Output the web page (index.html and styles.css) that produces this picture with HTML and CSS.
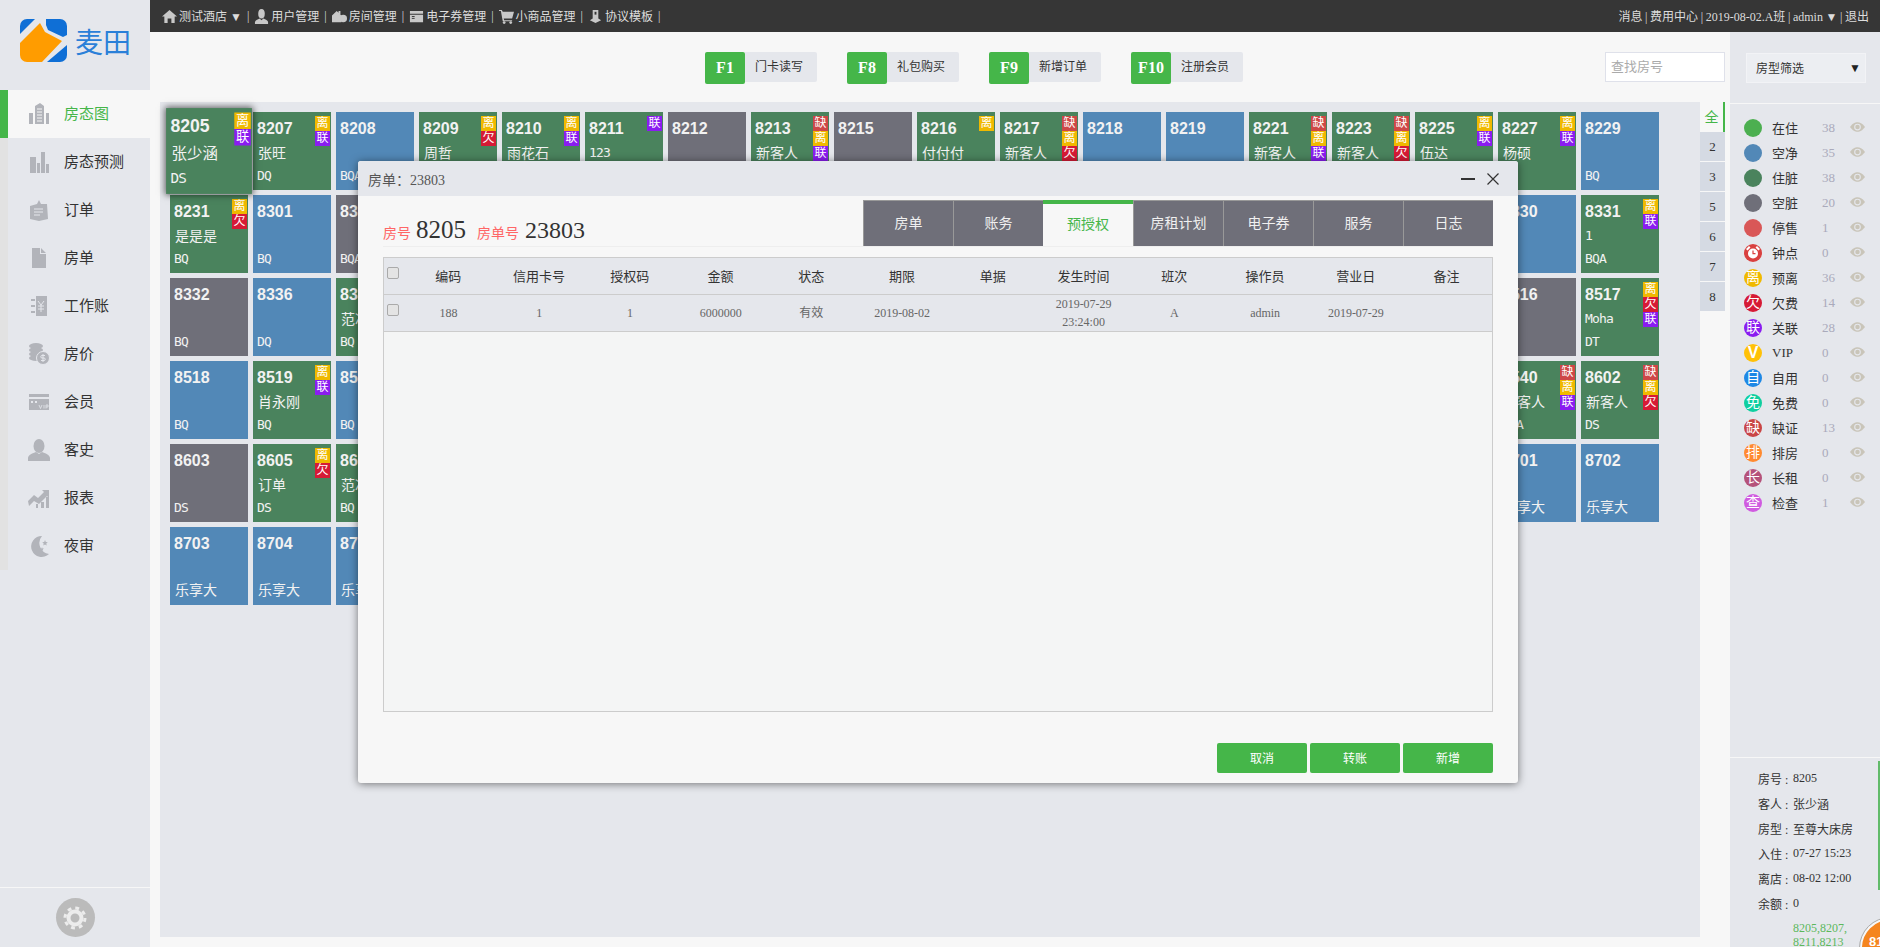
FILE: index.html
```html
<!DOCTYPE html>
<html lang="zh-CN">
<head>
    <meta charset="UTF-8">
    <title>房态图</title>
    <link rel="stylesheet" href="styles.css">
</head>
<body>
    <svg class="sprites" width="0" height="0">
        <symbol id="eye" viewBox="0 0 16 10">
            <path d="M0 5C3 1 5.500 0 8 0s5 1 8 5c-3 4-5.500 5-8 5S3 9 0 5z" fill="#c9c5b9"/>
            <circle cx="8" cy="5" r="3.600" fill="#e5e7ec"/>
            <circle cx="8" cy="5" r="2.400" fill="#c9c5b9"/>
        </symbol>
    </svg>

    <div class="app">
        <aside class="sidebar">
            <div class="logo">
                <svg width="48" height="43" viewBox="0 0 48 43">
                    <path d="M7 0h8L0 15V7a7 7 0 0 1 7-7z" fill="#0f6fd6"/>
                    <path d="M0 24L20 4l5 9 17 9-20 21H7a7 7 0 0 1-7-7z" fill="#ff9c00"/>
                    <path d="M26 0h14a7 7 0 0 1 7 7v9l-4 2-15-7-2-5z" fill="#0f6fd6"/>
                    <path d="M47 26v10a7 7 0 0 1-7 7H27z" fill="#0f6fd6"/>
                </svg>
                <span class="logo-text">麦田</span>
            </div>
            <nav class="nav">
                <a class="nav-item active">
                    <svg class="nav-icon" viewBox="0 0 22 22"><path d="M1 21V10h4v11zM7 21V3l5-3 4 3v18zM18 21V10h3v11z"/><path d="M9 6h5M9 9h5M9 12h5M9 15h5M9 18h5" stroke="#f7f7f7"/></svg>
                    房态图
                </a>
                <a class="nav-item">
                    <svg class="nav-icon" viewBox="0 0 22 22"><path d="M2 6h6v16H2zM9 12h3v10H9zM13 1h4v21h-4zM18 13h3v9h-3z"/></svg>
                    房态预测
                </a>
                <a class="nav-item">
                    <svg class="nav-icon" viewBox="0 0 22 22"><path d="M2 7l7-2 2-4 2 4 6 0 1 15-9 2-9-2z"/><path d="M6 10h9M6 13h9M6 16h6" stroke="#e5e7ec"/></svg>
                    订单
                </a>
                <a class="nav-item">
                    <svg class="nav-icon" viewBox="0 0 22 22"><path d="M4 1h8v6h6v14H4zM13 1l5 5h-5z"/></svg>
                    房单
                </a>
                <a class="nav-item">
                    <svg class="nav-icon" viewBox="0 0 22 22"><path d="M8 1h11v20H8zM3 4h4v2H3zM3 10h4v2H3zM3 16h4v2H3z"/><path d="M10 6l3 4 3-4M13 10v7M10 11h6M10 14h6" stroke="#e5e7ec" fill="none"/></svg>
                    工作账
                </a>
                <a class="nav-item">
                    <svg class="nav-icon" viewBox="0 0 22 22"><ellipse cx="8" cy="3" rx="7" ry="3"/><ellipse cx="8" cy="7" rx="7" ry="3"/><ellipse cx="8" cy="11" rx="7" ry="3"/><ellipse cx="8" cy="15" rx="7" ry="3"/><circle cx="15" cy="15" r="6.500" stroke="#e5e7ec"/><path d="M17 12.500h-3a1 1 0 0 0 0 2.500h2a1 1 0 0 1 0 2.500h-3M15 11v8" stroke="#e5e7ec" fill="none"/></svg>
                    房价
                </a>
                <a class="nav-item">
                    <svg class="nav-icon" viewBox="0 0 22 22"><path d="M1 3h20v3H1zM1 8h20v11H1z"/><path d="M3 11h2M7 11h2" stroke="#e5e7ec" stroke-width="2"/><path d="M11 14l1.500 3.500L14 14M16 14v3.500M18 17.500V14h2v2h-2" stroke="#e5e7ec" fill="none" stroke-width=".8"/></svg>
                    会员
                </a>
                <a class="nav-item">
                    <svg class="nav-icon" viewBox="0 0 22 22"><ellipse cx="11" cy="7" rx="5.500" ry="7"/><path d="M0 22v-3c0-3 5-5 8-6l3 2 3-2c3 1 8 3 8 6v3z"/></svg>
                    客史
                </a>
                <a class="nav-item">
                    <svg class="nav-icon" viewBox="0 0 22 22"><path d="M0 14l6-6 4 3 6-6-2-2h7v8l-2-2-8 8-5-3-5 5zM8 17h2v4H8zM13 15h3v6h-3zM18 10h3v11h-3z"/></svg>
                    报表
                </a>
                <a class="nav-item">
                    <svg class="nav-icon" viewBox="0 0 22 22"><path d="M14 1A10.500 10.500 0 1 0 21 19 11 11 0 0 1 14 1z"/><path d="M17 5l.8 2 2 .2-1.500 1.400.4 2-1.700-1-1.700 1 .4-2-1.500-1.400 2-.2zM14 12l.5 1.500 1.500.1-1.200 1 .4 1.500-1.200-.8-1.200.8.400-1.500-1.200-1 1.500-.1z"/></svg>
                    夜审
                </a>
            </nav>
            <div class="settings">
                <span class="gear">
                    <svg width="24" height="24" viewBox="0 0 24 24" fill="none" stroke="#ececec">
                        <circle cx="12" cy="12" r="6.500" stroke-width="4"/>
                        <circle cx="12" cy="12" r="10" stroke-width="3" stroke-dasharray="3.850 4"/>
                    </svg>
                </span>
            </div>
        </aside>

        <header class="topbar">
            <div class="top-links">
                <span class="top-item"><svg class="top-icon" viewBox="0 0 16 16"><path d="M8 1L0 8h2.500v7H6v-5h4v5h3.500V8H16z"/></svg>测试酒店 ▼</span>
                <span>|</span>
                <span class="top-item"><svg class="top-icon" viewBox="0 0 16 16"><ellipse cx="8" cy="5" rx="3.500" ry="5"/><path d="M1 16v-2c0-2 3-3 5-4l2 2 2-2c2 1 5 2 5 4v2z"/></svg>用户管理</span>
                <span>|</span>
                <span class="top-item"><svg class="top-icon" viewBox="0 0 16 16"><path d="M0 14V7l5-5 2 2V2h2v4l1 1v7z"/><circle cx="12" cy="10" r="4"/></svg>房间管理</span>
                <span>|</span>
                <span class="top-item"><svg class="top-icon" viewBox="0 0 16 16"><path d="M1 2h14v3H1zM1 6h14v8H1z"/><path d="M3 8h3M3 10h3" stroke="#363636"/></svg>电子券管理</span>
                <span>|</span>
                <span class="top-item"><svg class="top-icon" viewBox="0 0 16 16"><path d="M0 1h3l1 2h12l-2 7H5l.5 2H14v1H4L2 2H0z"/><circle cx="5.500" cy="14.500" r="1.500"/><circle cx="12.500" cy="14.500" r="1.500"/></svg>小商品管理</span>
                <span>|</span>
                <span class="top-item"><svg class="top-icon" viewBox="0 0 16 16"><path d="M5 1h6v9l3 2-6 3-6-3 3-2z"/><path d="M7 3h2v3H7z" fill="#363636"/></svg>协议模板</span>
                <span>|</span>
            </div>
            <div class="top-user">消息 | 费用中心 | 2019-08-02.A班 | admin ▼ | 退出</div>
        </header>

        <main class="main">
            <div class="toolbar">
                <div class="tools">
                    <div class="tool"><span class="key">F1</span><span class="tool-label">门卡读写</span></div>
                    <div class="tool"><span class="key">F8</span><span class="tool-label">礼包购买</span></div>
                    <div class="tool"><span class="key">F9</span><span class="tool-label">新增订单</span></div>
                    <div class="tool"><span class="key">F10</span><span class="tool-label">注册会员</span></div>
                </div>
                <input class="search" type="text" placeholder="查找房号">
            </div>
            <div class="floor-area">
                <div class="rooms">
                    <div class="room green selected"><b>8205</b><span class="name">张少涵</span><span class="code">DS</span><div class="flags"><i class="li">离</i><i class="lian">联</i></div></div>
                    <div class="room green"><b>8207</b><span class="name">张旺</span><span class="code">DQ</span><div class="flags"><i class="li">离</i><i class="lian">联</i></div></div>
                    <div class="room blue"><b>8208</b><span class="code">BQA</span></div>
                    <div class="room green"><b>8209</b><span class="name">周哲</span><div class="flags"><i class="li">离</i><i class="qian">欠</i></div></div>
                    <div class="room green"><b>8210</b><span class="name">雨花石</span><div class="flags"><i class="li">离</i><i class="lian">联</i></div></div>
                    <div class="room green"><b>8211</b><span class="name latin">123</span><div class="flags"><i class="lian">联</i></div></div>
                    <div class="room grey"><b>8212</b></div>
                    <div class="room green"><b>8213</b><span class="name">新客人</span><div class="flags"><i class="que">缺</i><i class="li">离</i><i class="lian">联</i></div></div>
                    <div class="room grey"><b>8215</b></div>
                    <div class="room green"><b>8216</b><span class="name">付付付</span><div class="flags"><i class="li">离</i></div></div>
                    <div class="room green"><b>8217</b><span class="name">新客人</span><div class="flags"><i class="que">缺</i><i class="li">离</i><i class="qian">欠</i></div></div>
                    <div class="room blue"><b>8218</b></div>
                    <div class="room blue"><b>8219</b></div>
                    <div class="room green"><b>8221</b><span class="name">新客人</span><div class="flags"><i class="que">缺</i><i class="li">离</i><i class="lian">联</i></div></div>
                    <div class="room green"><b>8223</b><span class="name">新客人</span><div class="flags"><i class="que">缺</i><i class="li">离</i><i class="qian">欠</i></div></div>
                    <div class="room green"><b>8225</b><span class="name">伍达</span><div class="flags"><i class="li">离</i><i class="lian">联</i></div></div>
                    <div class="room green"><b>8227</b><span class="name">杨硕</span><div class="flags"><i class="li">离</i><i class="lian">联</i></div></div>
                    <div class="room blue"><b>8229</b><span class="code">BQ</span></div>

                    <div class="room green"><b>8231</b><span class="name">是是是</span><span class="code">BQ</span><div class="flags"><i class="li">离</i><i class="qian">欠</i></div></div>
                    <div class="room blue"><b>8301</b><span class="code">BQ</span></div>
                    <div class="room grey"><b>8302</b><span class="code">BQA</span></div>
                    <div class="room blue"></div><div class="room blue"></div><div class="room blue"></div><div class="room blue"></div>
                    <div class="room blue"></div><div class="room blue"></div><div class="room blue"></div><div class="room blue"></div>
                    <div class="room blue"></div><div class="room blue"></div><div class="room blue"></div><div class="room blue"></div>
                    <div class="room blue"></div>
                    <div class="room blue"><b>8330</b></div>
                    <div class="room green"><b>8331</b><span class="name latin">1</span><span class="code">BQA</span><div class="flags"><i class="li">离</i><i class="lian">联</i></div></div>

                    <div class="room grey"><b>8332</b><span class="code">BQ</span></div>
                    <div class="room blue"><b>8336</b><span class="code">DQ</span></div>
                    <div class="room green"><b>8337</b><span class="name">范冰</span><span class="code">BQ</span></div>
                    <div class="room blue"></div><div class="room blue"></div><div class="room blue"></div><div class="room blue"></div>
                    <div class="room blue"></div><div class="room blue"></div><div class="room blue"></div><div class="room blue"></div>
                    <div class="room blue"></div><div class="room blue"></div><div class="room blue"></div><div class="room blue"></div>
                    <div class="room blue"></div>
                    <div class="room grey"><b>8516</b></div>
                    <div class="room green"><b>8517</b><span class="name latin">Moha</span><span class="code">DT</span><div class="flags"><i class="li">离</i><i class="qian">欠</i><i class="lian">联</i></div></div>

                    <div class="room blue"><b>8518</b><span class="code">BQ</span></div>
                    <div class="room green"><b>8519</b><span class="name">肖永刚</span><span class="code">BQ</span><div class="flags"><i class="li">离</i><i class="lian">联</i></div></div>
                    <div class="room blue"><b>8520</b><span class="code">BQ</span></div>
                    <div class="room blue"></div><div class="room blue"></div><div class="room blue"></div><div class="room blue"></div>
                    <div class="room blue"></div><div class="room blue"></div><div class="room blue"></div><div class="room blue"></div>
                    <div class="room blue"></div><div class="room blue"></div><div class="room blue"></div><div class="room blue"></div>
                    <div class="room blue"></div>
                    <div class="room green"><b>8540</b><span class="name">新客人</span><span class="code">BQA</span><div class="flags"><i class="que">缺</i><i class="li">离</i><i class="lian">联</i></div></div>
                    <div class="room green"><b>8602</b><span class="name">新客人</span><span class="code">DS</span><div class="flags"><i class="que">缺</i><i class="li">离</i><i class="qian">欠</i></div></div>

                    <div class="room grey"><b>8603</b><span class="code">DS</span></div>
                    <div class="room green"><b>8605</b><span class="name">订单</span><span class="code">DS</span><div class="flags"><i class="li">离</i><i class="qian">欠</i></div></div>
                    <div class="room green"><b>8606</b><span class="name">范冰</span><span class="code">BQ</span></div>
                    <div class="room blue"></div><div class="room blue"></div><div class="room blue"></div><div class="room blue"></div>
                    <div class="room blue"></div><div class="room blue"></div><div class="room blue"></div><div class="room blue"></div>
                    <div class="room blue"></div><div class="room blue"></div><div class="room blue"></div><div class="room blue"></div>
                    <div class="room blue"></div>
                    <div class="room blue"><b>8701</b><span class="name-low">乐享大</span></div>
                    <div class="room blue"><b>8702</b><span class="name-low">乐享大</span></div>

                    <div class="room blue"><b>8703</b><span class="name-low">乐享大</span></div>
                    <div class="room blue"><b>8704</b><span class="name-low">乐享大</span></div>
                    <div class="room blue"><b>8705</b><span class="name-low">乐享大</span></div>
                </div>
                <div class="floors">
                    <span class="floor active">全</span>
                    <span class="floor">2</span>
                    <span class="floor">3</span>
                    <span class="floor">5</span>
                    <span class="floor">6</span>
                    <span class="floor">7</span>
                    <span class="floor">8</span>
                </div>
            </div>
        </main>

        <aside class="side-right">
            <div class="filter">
                <div class="room-type">房型筛选<span class="caret">▼</span></div>
            </div>
            <ul class="legend">
                <li><span class="dot" style="background:#4caf50"></span><span class="legend-name">在住</span><span class="count">38</span><svg class="eye"><use href="#eye"/></svg></li>
                <li><span class="dot" style="background:#5288b7"></span><span class="legend-name">空净</span><span class="count">35</span><svg class="eye"><use href="#eye"/></svg></li>
                <li><span class="dot" style="background:#4a835d"></span><span class="legend-name">住脏</span><span class="count">38</span><svg class="eye"><use href="#eye"/></svg></li>
                <li><span class="dot" style="background:#6f6f79"></span><span class="legend-name">空脏</span><span class="count">20</span><svg class="eye"><use href="#eye"/></svg></li>
                <li><span class="dot" style="background:#d95757"></span><span class="legend-name">停售</span><span class="count">1</span><svg class="eye"><use href="#eye"/></svg></li>
                <li><span class="dot" style="background:#d9403f"><svg width="14" height="14" viewBox="0 0 14 14"><circle cx="7" cy="7.500" r="5" fill="#fff"/><path d="M7 4.500v3.200h2.500" stroke="#d9403f" stroke-width="1.200" fill="none"/><path d="M0 3l3-3 1.500 1.500-3 3zM14 3l-3-3-1.500 1.500 3 3z" fill="#fff"/></svg></span><span class="legend-name">钟点</span><span class="count">0</span><svg class="eye"><use href="#eye"/></svg></li>
                <li><span class="dot" style="background:#f0b900">离</span><span class="legend-name">预离</span><span class="count">36</span><svg class="eye"><use href="#eye"/></svg></li>
                <li><span class="dot" style="background:#d61a35">欠</span><span class="legend-name">欠费</span><span class="count">14</span><svg class="eye"><use href="#eye"/></svg></li>
                <li><span class="dot" style="background:#8a1cf0">联</span><span class="legend-name">关联</span><span class="count">28</span><svg class="eye"><use href="#eye"/></svg></li>
                <li><span class="dot vip" style="background:#ffc107">V</span><span class="legend-name">VIP</span><span class="count">0</span><svg class="eye"><use href="#eye"/></svg></li>
                <li><span class="dot" style="background:#1e88e5">自</span><span class="legend-name">自用</span><span class="count">0</span><svg class="eye"><use href="#eye"/></svg></li>
                <li><span class="dot" style="background:#0fcfa0">免</span><span class="legend-name">免费</span><span class="count">0</span><svg class="eye"><use href="#eye"/></svg></li>
                <li><span class="dot" style="background:#c94545">缺</span><span class="legend-name">缺证</span><span class="count">13</span><svg class="eye"><use href="#eye"/></svg></li>
                <li><span class="dot" style="background:#ff8a30">排</span><span class="legend-name">排房</span><span class="count">0</span><svg class="eye"><use href="#eye"/></svg></li>
                <li><span class="dot" style="background:#b5527a">长</span><span class="legend-name">长租</span><span class="count">0</span><svg class="eye"><use href="#eye"/></svg></li>
                <li><span class="dot" style="background:#d05be0">查</span><span class="legend-name">检查</span><span class="count">1</span><svg class="eye"><use href="#eye"/></svg></li>
            </ul>
            <div class="info">
                <div class="info-row"><span class="info-label">房号 :</span>8205</div>
                <div class="info-row"><span class="info-label">客人 :</span>张少涵</div>
                <div class="info-row"><span class="info-label">房型 :</span>至尊大床房</div>
                <div class="info-row"><span class="info-label">入住 :</span>07-27 15:23</div>
                <div class="info-row"><span class="info-label">离店 :</span>08-02 12:00</div>
                <div class="info-row"><span class="info-label">余额 :</span>0</div>
                <div class="linked">8205,8207,<br>8211,8213</div>
            </div>
        </aside>
    </div>

    <div class="bubble">81</div>

    <section class="dialog">
        <div class="dialog-head">
            <span class="dialog-title">房单：23803</span>
            <div class="dialog-btns">
                <span class="btn-min"></span>
                <svg width="12" height="12" viewBox="0 0 12 12"><path d="M.5.500l11 11M11.500.500l-11 11" stroke="#333" stroke-width="1.200"/></svg>
            </div>
        </div>
        <div class="dialog-body">
            <div class="bill-top">
                <div class="bill-title">
                    <span class="bill-label">房号</span><span class="bill-no room-no">8205</span>
                    <span class="bill-label">房单号</span><span class="bill-no">23803</span>
                </div>
                <div class="tabs">
                    <span class="tab">房单</span>
                    <span class="tab">账务</span>
                    <span class="tab active">预授权</span>
                    <span class="tab">房租计划</span>
                    <span class="tab">电子券</span>
                    <span class="tab">服务</span>
                    <span class="tab">日志</span>
                </div>
            </div>
            <div class="table-box">
                <table class="auth-table">
                    <colgroup>
                        <col class="col-check">
                        <col><col><col><col><col><col><col><col><col><col><col><col>
                    </colgroup>
                    <thead>
                        <tr>
                            <th><input class="check" type="checkbox"></th>
                            <th>编码</th><th>信用卡号</th><th>授权码</th><th>金额</th><th>状态</th><th>期限</th>
                            <th>单据</th><th>发生时间</th><th>班次</th><th>操作员</th><th>营业日</th><th>备注</th>
                        </tr>
                    </thead>
                    <tbody>
                        <tr>
                            <td><input class="check" type="checkbox"></td>
                            <td>188</td><td>1</td><td>1</td><td>6000000</td><td>有效</td><td>2019-08-02</td>
                            <td></td><td>2019-07-29<br>23:24:00</td><td>A</td><td>admin</td><td>2019-07-29</td><td></td>
                        </tr>
                    </tbody>
                </table>
            </div>
            <div class="dialog-foot">
                <button class="btn">取消</button>
                <button class="btn">转账</button>
                <button class="btn">新增</button>
            </div>
        </div>
    </section>
</body>
</html>
```

FILE: styles.css
```css
* {
    box-sizing: border-box;
}
html, body {
    height: 100%;
    margin: 0;
    overflow: hidden;
}
body {
    position: relative;
    font-family: "Liberation Serif", "Noto Sans CJK SC", serif;
    font-size: 12px;
    color: #333;
    background-color: #f7f7f7;
}
.sprites {
    position: absolute;
}
ul {
    margin: 0;
    padding: 0;
    list-style: none;
}

.app {
    display: grid;
    grid-template-columns: 150px 1fr 150px;
    grid-template-rows: 32px 1fr;
    height: 100vh;
}

/* left menu */
.sidebar {
    grid-row: 1 / 3;
    display: flex;
    flex-direction: column;
    background-color: #e5e7ec;
}
.logo {
    display: flex;
    align-items: center;
    gap: 7px;
    height: 90px;
    padding: 0 0 9px 20px;
}
.logo-text {
    font-family: "Noto Sans CJK SC", sans-serif;
    font-size: 28px;
    line-height: 32px;
    color: #2a80d8;
}
.nav {
    border-left: 8px solid #e2e2e2;
}
.nav-item {
    display: flex;
    align-items: center;
    gap: 14px;
    height: 48px;
    padding: 0 0 4px 20px;
    font-size: 15px;
}
.nav-item.active {
    margin-left: -8px;
    border-left: 8px solid #45b649;
    color: #45b649;
    background-color: #f7f7f7;
}
.nav-icon {
    width: 22px;
    height: 22px;
    margin-top: 4px;
    fill: #b2b4ba;
}
.settings {
    display: flex;
    justify-content: center;
    align-items: center;
    margin-top: auto;
    height: 60px;
    border-top: 1px solid #f7f7f7;
}
.gear {
    display: flex;
    justify-content: center;
    align-items: center;
    width: 39px;
    height: 39px;
    border-radius: 50%;
    background-color: #bbb;
}

/* top bar */
.topbar {
    grid-column: 2 / 4;
    display: flex;
    justify-content: space-between;
    align-items: center;
    padding: 0 11px 0 12px;
    color: #ddd;
    background-color: #363636;
}
.top-links {
    display: flex;
    align-items: center;
    gap: 5px;
}
.top-item {
    display: flex;
    align-items: center;
    gap: 2px;
}
.top-icon {
    width: 15px;
    height: 15px;
    fill: #c8c8c8;
}
.top-user {
    word-spacing: -0.4px;
}

/* toolbar */
.main {
    display: flex;
    flex-direction: column;
    min-width: 0;
    padding: 0 5px 10px 10px;
}
.toolbar {
    display: flex;
    justify-content: space-between;
    height: 70px;
    padding: 20px 0 0 545px;
}
.tools {
    display: flex;
    gap: 30px;
}
.tool {
    display: flex;
    width: 112px;
    align-items: flex-start;
}
.key {
    width: 40px;
    height: 32px;
    border-radius: 2px;
    font-size: 16px;
    font-weight: bold;
    line-height: 32px;
    text-align: center;
    color: #fff;
    background-color: #45b649;
}
.tool-label {
    width: 72px;
    height: 30px;
    padding-left: 10px;
    border-radius: 0 2px 2px 0;
    line-height: 30px;
    background-color: #e5e7ec;
}
.search {
    width: 120px;
    height: 30px;
    padding: 0 5px;
    border: 1px solid #dfe1ea;
    font-family: inherit;
    font-size: 13px;
    background-color: #fff;
}
.search::placeholder {
    color: #aaa;
}

/* room grid */
.floor-area {
    flex: 1;
    display: flex;
    min-height: 0;
}
.rooms {
    flex: 1;
    display: grid;
    grid-template-columns: repeat(18, 78px);
    grid-auto-rows: 78px;
    gap: 5px;
    align-content: start;
    padding: 10px;
    background-color: #e5e7ec;
}
.room {
    position: relative;
    display: grid;
    grid-template-rows: 24px 24px 20px;
    align-items: center;
    padding: 5px 0 0 4px;
    color: #f2f2f2;
}
.room b {
    font-family: "Liberation Sans", sans-serif;
    font-size: 16px;
}
.green { background-color: #4a835d; }
.blue { background-color: #5288b7; }
.grey { background-color: #6f6f79; }
.selected {
    z-index: 2;
    transform: scale(1.1);
    box-shadow: 0 0 6px 1px rgba(0, 0, 0, 0.6);
}
.name {
    grid-row: 2;
    margin-top: -2px;
    padding-left: 1px;
    font-size: 14px;
    white-space: nowrap;
}
.name.latin, .code {
    font-family: "DejaVu Sans Mono", monospace;
    font-size: 13px;
    letter-spacing: -0.8px;
}
.name.latin {
    padding-left: 0;
}
.name-low {
    grid-row: 3;
    margin-top: -2px;
    padding-left: 1px;
    font-size: 14px;
}
.code {
    grid-row: 3;
}
.flags {
    position: absolute;
    top: 4px;
    right: 1px;
    width: 15px;
}
.flags i {
    display: block;
    height: 15px;
    font-style: normal;
    line-height: 15px;
    text-align: center;
    color: #fff;
}
.li { background-color: #f0b900; }
.lian { background-color: #8a1cf0; }
.qian { background-color: #d61a35; }
.que { background-color: #ce4747; }

.floors {
    display: flex;
    flex-direction: column;
    width: 25px;
}
.floor {
    height: 30px;
    border-bottom: 1px solid #f7f7f7;
    font-size: 13px;
    line-height: 29px;
    text-align: center;
    background-color: #d5dae3;
}
.floor.active {
    border-right: 2px solid #45b649;
    border-bottom: 0;
    font-size: 14px;
    line-height: 32px;
    color: #45b649;
    background-color: #f7f7f7;
}

/* right panel */
.side-right {
    display: flex;
    flex-direction: column;
    background-color: #e5e7ec;
}
.filter {
    height: 72px;
    padding: 21px 14px 0 16px;
    border-bottom: 1px solid #f7f7f7;
}
.room-type {
    display: flex;
    justify-content: space-between;
    align-items: center;
    height: 30px;
    padding: 0 4px 0 9px;
    border: 1px solid #f2f3f6;
    background-color: #eceef2;
}
.caret {
    font-size: 12px;
    color: #222;
}
.legend {
    padding-top: 11px;
}
.legend li {
    display: flex;
    align-items: center;
    height: 25px;
    padding-left: 14px;
    font-size: 13px;
}
.dot {
    display: flex;
    justify-content: center;
    align-items: center;
    width: 18px;
    height: 18px;
    border-radius: 50%;
    font-size: 14px;
    line-height: 18px;
    color: #fff;
}
.dot.vip {
    font-family: "Liberation Sans", sans-serif;
    font-size: 16px;
    font-weight: bold;
}
.legend-name {
    width: 50px;
    margin-left: 10px;
}
.count {
    width: 28px;
    color: #aab;
}
.eye {
    width: 15px;
    height: 10px;
    margin-top: -2px;
}
.info {
    position: relative;
    margin-top: auto;
    height: 190px;
    padding: 8px 0 0 28px;
    border-top: 1px solid #f7f7f7;
}
.info::after {
    content: "";
    position: absolute;
    top: 3px;
    right: 0;
    width: 2px;
    height: 129px;
    background-color: #62bb6a;
}
.info-row {
    display: flex;
    height: 25px;
    align-items: center;
}
.info-label {
    width: 35px;
}
.linked {
    margin: 5px 0 0 35px;
    line-height: 14px;
    color: #5cb85c;
}
.bubble {
    position: absolute;
    left: 1860px;
    top: 918px;
    width: 60px;
    height: 60px;
    padding: 14px 0 0 7px;
    border: 2px solid #f7f7f7;
    outline: 1px solid #aaa;
    border-radius: 50%;
    font-family: "Liberation Sans", sans-serif;
    font-size: 13px;
    font-weight: bold;
    color: #fff;
    background-color: #f5851f;
}

/* bill dialog */
.dialog {
    position: absolute;
    left: 358px;
    top: 161px;
    z-index: 5;
    display: flex;
    flex-direction: column;
    width: 1160px;
    height: 622px;
    border-radius: 3px;
    background-color: #f7f7f7;
    box-shadow: 0 1px 8px rgba(0, 0, 0, 0.5);
}
.dialog-head {
    display: flex;
    justify-content: space-between;
    align-items: center;
    height: 35px;
    padding: 0 19px 0 10px;
    border-radius: 3px 3px 0 0;
    color: #555;
    background-color: #e5e7ec;
}
.dialog-title {
    font-family: "Liberation Serif", "Noto Sans CJK TC", serif;
    font-size: 14px;
}
.dialog-btns {
    display: flex;
    align-items: center;
    gap: 12px;
}
.btn-min {
    width: 14px;
    height: 2px;
    background-color: #333;
}
.dialog-body {
    flex: 1;
    display: flex;
    flex-direction: column;
    padding: 0 25px;
}
.bill-top {
    display: flex;
    justify-content: space-between;
    align-items: flex-end;
    height: 51px;
    border-bottom: 1px solid #eee;
}
.bill-title {
    display: flex;
    align-items: baseline;
    padding-bottom: 2px;
}
.bill-label {
    font-size: 14px;
    color: #f66;
}
.bill-no {
    margin: 0 10px 0 6px;
    font-size: 24px;
}
.room-no {
    margin: 0 11px 0 5px;
    font-size: 25px;
}
.tabs {
    display: flex;
}
.tab {
    width: 90px;
    height: 46px;
    border-top: 1px solid #999;
    border-left: 1px solid #999;
    font-size: 14px;
    line-height: 46px;
    text-align: center;
    color: #f0f0f0;
    background-color: #6f6f79;
}
.tab.active {
    border-top: 4px solid #45b649;
    border-left: 0;
    line-height: 42px;
    color: #45b649;
    background-color: #f7f7f7;
}
.table-box {
    height: 455px;
    margin-top: 10px;
    border: 1px solid #ccc;
    background-color: #f4f5f5;
}
.auth-table {
    width: 100%;
    table-layout: fixed;
    border-collapse: collapse;
}
.col-check {
    width: 19px;
}
.auth-table th {
    height: 36px;
    padding: 0;
    font-size: 13px;
    font-weight: normal;
    color: #333;
    background-color: #e5e7ec;
}
.auth-table td {
    height: 36px;
    padding: 0;
    line-height: 18px;
    text-align: center;
    color: #666;
    background-color: #e5e7ec;
}
.auth-table tr {
    border-bottom: 1px solid #ccc;
}
.auth-table tbody tr {
    border-top: 1px solid #ccc;
}
.check {
    appearance: none;
    display: block;
    width: 12px;
    height: 12px;
    margin: -5px 0 0 3px;
    border: 1px solid #aaa;
    border-radius: 2px;
    background-color: #e4e4e4;
}
.dialog-foot {
    display: flex;
    justify-content: flex-end;
    gap: 3px;
    margin-top: 31px;
}
.btn {
    width: 90px;
    height: 30px;
    padding: 0;
    border: 0;
    border-radius: 2px;
    font-family: inherit;
    font-size: 12px;
    color: #fff;
    background-color: #45b649;
}
```
